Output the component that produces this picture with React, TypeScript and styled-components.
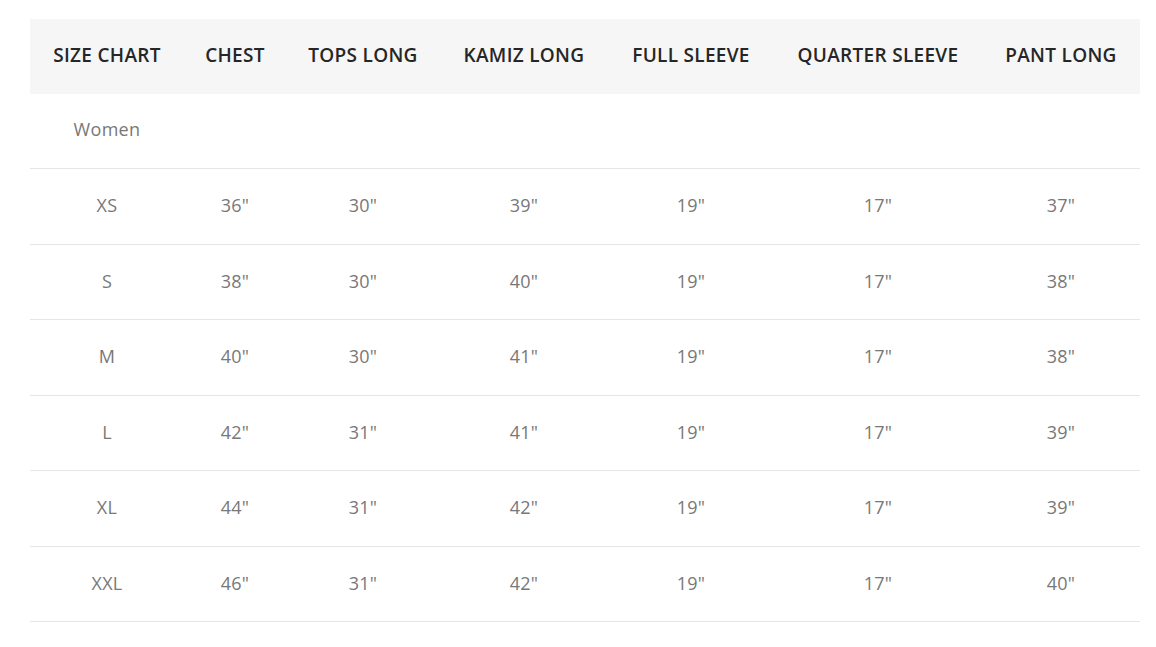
import React from "react";
import styled, { createGlobalStyle } from "styled-components";

const Global = createGlobalStyle`
  html, body { margin: 0; padding: 0; background: #fff; }
  body { font-family: "Open Sans", "Noto Sans", sans-serif; }
`;

const Wrap = styled.div`
  padding: 19px 16px 0 30px;
`;

const Table = styled.table`
  width: 100%;
  table-layout: fixed;
  border-collapse: collapse;
  font-family: "Open Sans", "Noto Sans", sans-serif;
  font-size: 18px;
`;

const Col = styled.col<{ $w: number }>`
  width: ${(p) => p.$w}px;
`;

const HeadRow = styled.tr`
  background: #f6f6f6;
`;

const Th = styled.th`
  height: 72px;
  padding: 0 0 3px;
  font-size: 19px;
  letter-spacing: 0.3px;
  font-weight: 600;
  color: #262626;
  text-align: center;
  white-space: nowrap;
`;

const Row = styled.tr`
  border-bottom: 1px solid #e6e6e6;
`;

const Td = styled.td<{ $label?: boolean }>`
  height: ${(p) => (p.$label ? "70px" : "72.5px")};
  padding: 0 0 ${(p) => (p.$label ? "4px" : "2px")};
  color: #787878;
  letter-spacing: 0.3px;
  text-align: center;
  white-space: nowrap;
`;

const widths = [154, 102, 154, 168, 166, 208, 158];

const headers = [
  "SIZE CHART",
  "CHEST",
  "TOPS LONG",
  "KAMIZ LONG",
  "FULL SLEEVE",
  "QUARTER SLEEVE",
  "PANT LONG",
];

const rows: string[][] = [
  ["XS", '36"', '30"', '39"', '19"', '17"', '37"'],
  ["S", '38"', '30"', '40"', '19"', '17"', '38"'],
  ["M", '40"', '30"', '41"', '19"', '17"', '38"'],
  ["L", '42"', '31"', '41"', '19"', '17"', '39"'],
  ["XL", '44"', '31"', '42"', '19"', '17"', '39"'],
  ["XXL", '46"', '31"', '42"', '19"', '17"', '40"'],
];

export default function App() {
  return (
    <Wrap>
      <Global />
      <Table>
        <colgroup>
          {widths.map((w, i) => (
            <Col key={i} $w={w} />
          ))}
        </colgroup>
        <thead>
          <HeadRow>
            {headers.map((h) => (
              <Th key={h}>{h}</Th>
            ))}
          </HeadRow>
        </thead>
        <tbody>
          <Row>
            <Td $label>Women</Td>
            {headers.slice(1).map((h) => (
              <Td key={h} $label />
            ))}
          </Row>
          {rows.map((r) => (
            <Row key={r[0]}>
              {r.map((c, i) => (
                <Td key={i}>{c}</Td>
              ))}
            </Row>
          ))}
        </tbody>
      </Table>
    </Wrap>
  );
}
